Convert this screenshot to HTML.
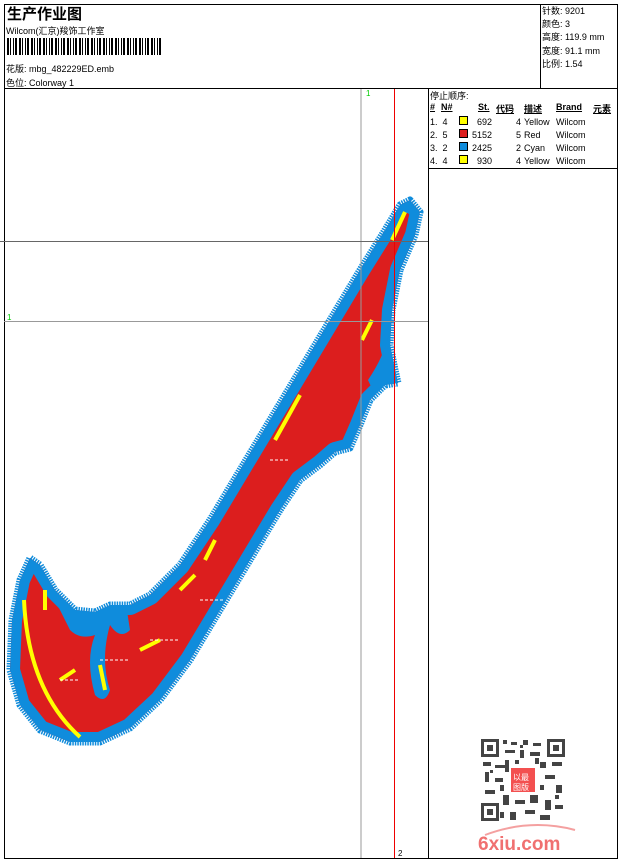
<!DOCTYPE html>
<html><head><meta charset="utf-8"><style>
body{margin:0;background:#fff;width:620px;height:860px;position:relative;overflow:hidden;font-family:"Liberation Sans","Noto Sans CJK SC",sans-serif;font-size:9px;color:#000}
.a{position:absolute;white-space:nowrap}
.l{position:absolute;background:#000}
.sw{position:absolute;width:9px;height:9px;border:1px solid #000;box-sizing:border-box}
</style></head><body>
<div class="l" style="left:4px;top:4px;width:614px;height:1px"></div>
<div class="l" style="left:4px;top:858px;width:614px;height:1px"></div>
<div class="l" style="left:4px;top:4px;width:1px;height:855px"></div>
<div class="l" style="left:617px;top:4px;width:1px;height:855px"></div>
<div class="l" style="left:4px;top:88px;width:614px;height:1px"></div>
<div class="l" style="left:540px;top:4px;width:1px;height:84px"></div>
<div class="l" style="left:428px;top:88px;width:1px;height:770px"></div>
<div class="l" style="left:428px;top:168px;width:190px;height:1px"></div>
<div class="a" style="left:7px;top:3px;font-size:15px;font-weight:bold">生产作业图</div>
<div class="a" style="left:6px;top:24px">Wilcom(汇京)羧饰工作室</div>
<div class="a" style="left:7px;top:38px;width:155px;height:17px;background:repeating-linear-gradient(90deg,#000 0 2px,#fff 2px 3px,#000 3px 4px,#fff 4px 6px,#000 6px 7px,#fff 7px 8px,#000 8px 10px,#fff 10px 12px)"></div>
<div class="a" style="left:6px;top:62px">花版: mbg_482229ED.emb</div>
<div class="a" style="left:6px;top:76px">色位: Colorway 1</div>
<div class="a" style="left:542px;top:5px;line-height:13.2px">针数: 9201<br>颜色: 3<br>高度: 119.9 mm<br>宽度: 91.1 mm<br>比例: 1.54</div>
<div class="a" style="left:430px;top:89px">停止顺序:</div>
<div class="a" style="left:430px;top:102px;font-weight:bold;text-decoration:underline">#</div>
<div class="a" style="left:441px;top:102px;font-weight:bold;text-decoration:underline">N#</div>
<div class="a" style="left:478px;top:102px;font-weight:bold;text-decoration:underline">St.</div>
<div class="a" style="left:496px;top:102px;font-weight:bold;text-decoration:underline">代码</div>
<div class="a" style="left:524px;top:102px;font-weight:bold;text-decoration:underline">描述</div>
<div class="a" style="left:556px;top:102px;font-weight:bold;text-decoration:underline">Brand</div>
<div class="a" style="left:593px;top:102px;font-weight:bold;text-decoration:underline">元素</div>
<div class="a" style="left:430px;top:116px;line-height:13px">1.&nbsp; 4<br>2.&nbsp; 5<br>3.&nbsp; 2<br>4.&nbsp; 4</div>
<div class="sw" style="left:459px;top:116px;background:#ffff00"></div>
<div class="sw" style="left:459px;top:129px;background:#dc1e1e"></div>
<div class="sw" style="left:459px;top:142px;background:#0f8cdc"></div>
<div class="sw" style="left:459px;top:155px;background:#ffff00"></div>
<div class="a" style="left:470px;top:116px;width:22px;text-align:right;line-height:13px">692<br>5152<br>2425<br>930</div>
<div class="a" style="left:505px;top:116px;width:16px;text-align:right;line-height:13px">4<br>5<br>2<br>4</div>
<div class="a" style="left:524px;top:116px;line-height:13px">Yellow<br>Red<br>Cyan<br>Yellow</div>
<div class="a" style="left:556px;top:116px;line-height:13px">Wilcom<br>Wilcom<br>Wilcom<br>Wilcom</div>
<svg class="a" style="left:0;top:0" width="620" height="860">
<defs><path id="p" d="M410,200 L420,212 L415,235 L400,270 L392,310 L390,345 L395,370 L398,383 L385,385 L370,400 L360,425 L350,448 L335,452 L320,465 L300,480 L280,510 L250,560 L220,610 L190,660 L160,700 L130,728 L100,742 L70,742 L40,730 L20,705 L10,670 L12,620 L20,580 L30,558 L40,565 L55,590 L75,610 L95,612 L110,605 L130,605 L150,595 L180,565 L210,520 L240,470 L270,420 L300,370 L330,320 L360,270 L385,230 L400,205 Z"/>
<clipPath id="c"><use href="#p"/></clipPath></defs>
<use href="#p" fill="none" stroke="#0f8cdc" stroke-width="7" stroke-linejoin="round" stroke-dasharray="1.5 1"/>
<g clip-path="url(#c)">
<rect x="0" y="190" width="430" height="560" fill="#dc1e1e"/>
<use href="#p" fill="none" stroke="#0f8cdc" stroke-width="20" stroke-linejoin="round"/>
<path d="M55,600 Q85,605 125,598 L130,630 Q120,640 110,625 Q100,660 110,690 Q105,705 95,695 Q85,660 95,635 Q80,640 70,630 Z" fill="#0f8cdc"/>
<path d="M368,380 Q385,355 390,330 L398,385 L375,395 Z" fill="#0f8cdc"/>
<g fill="none" stroke="#ffff00" stroke-width="4">
<path d="M24,600 Q28,690 80,737"/><path d="M405,212 L392,240"/><path d="M372,320 L362,340"/><path d="M300,395 L275,440"/><path d="M60,680 L75,670"/><path d="M140,650 L160,640"/><path d="M180,590 L195,575"/><path d="M100,665 L105,690"/><path d="M215,540 L205,560"/><path d="M45,590 L45,610"/></g>
<g fill="none" stroke="#fff" stroke-width="1" stroke-dasharray="3 2">
<path d="M100,660 h30M150,640 h30M200,600 h25M60,680 h20M270,460 h20"/></g>
</g>
<line x1="361" y1="89" x2="361" y2="858" stroke="#999" stroke-width="1"/>
<line x1="394.5" y1="89" x2="394.5" y2="858" stroke="#e00" stroke-width="1"/>
<line x1="0" y1="241.5" x2="428" y2="241.5" stroke="#666" stroke-width="1"/>
<line x1="4" y1="321.5" x2="428" y2="321.5" stroke="#999" stroke-width="1"/>
<text x="366" y="96" font-size="8" fill="#0c0" font-family="Liberation Sans">1</text>
<text x="7" y="320" font-size="8" fill="#0c0" font-family="Liberation Sans">1</text>
<text x="398" y="856" font-size="8" fill="#000" font-family="Liberation Sans">2</text>
<g fill="#444">
<path d="M481,739h18v18h-18zM484,742v12h12v-12zM547,739h18v18h-18zM550,742v12h12v-12zM481,803h18v18h-18zM484,806v12h12v-12z" fill-rule="evenodd"/>
<rect x="487" y="745" width="6" height="6"/><rect x="553" y="745" width="6" height="6"/><rect x="487" y="809" width="6" height="6"/>
<path d="M503,740h4v4h-4zM511,742h6v3h-6zM523,740h5v5h-5zM533,743h8v3h-8zM505,750h10v3h-10zM520,750h4v8h-4zM530,752h10v4h-10zM483,762h8v4h-8zM495,765h10v3h-10zM540,762h6v6h-6zM552,762h10v4h-10zM485,772h4v10h-4zM495,778h8v4h-8zM545,775h10v4h-10zM556,785h6v8h-6zM485,790h10v4h-10zM503,795h6v10h-6zM515,800h10v4h-10zM530,795h8v8h-8zM545,800h6v10h-6zM555,805h8v4h-8zM510,812h6v8h-6zM525,810h10v4h-10zM540,815h10v5h-10zM500,785h4v6h-4zM540,785h4v5h-4zM505,760h4v12h-4zM535,758h4v6h-4zM490,770h3v3h-3zM520,745h3v3h-3zM515,760h4v4h-4zM555,795h4v4h-4zM500,812h4v6h-4z"/>
</g>
<rect x="511" y="768" width="24" height="24" fill="#f35050"/>
<text x="513" y="780" font-size="8" fill="#fff" font-family="Noto Sans CJK SC">以最</text>
<text x="513" y="790" font-size="8" fill="#fff" font-family="Noto Sans CJK SC">图版</text>
<path d="M485,835 Q530,818 575,830" stroke="#f4a0a0" stroke-width="2" fill="none"/>
<text x="478" y="850" font-size="19" font-weight="bold" fill="#f07070" font-family="Liberation Sans">6xiu.com</text>
</svg>
</body></html>
